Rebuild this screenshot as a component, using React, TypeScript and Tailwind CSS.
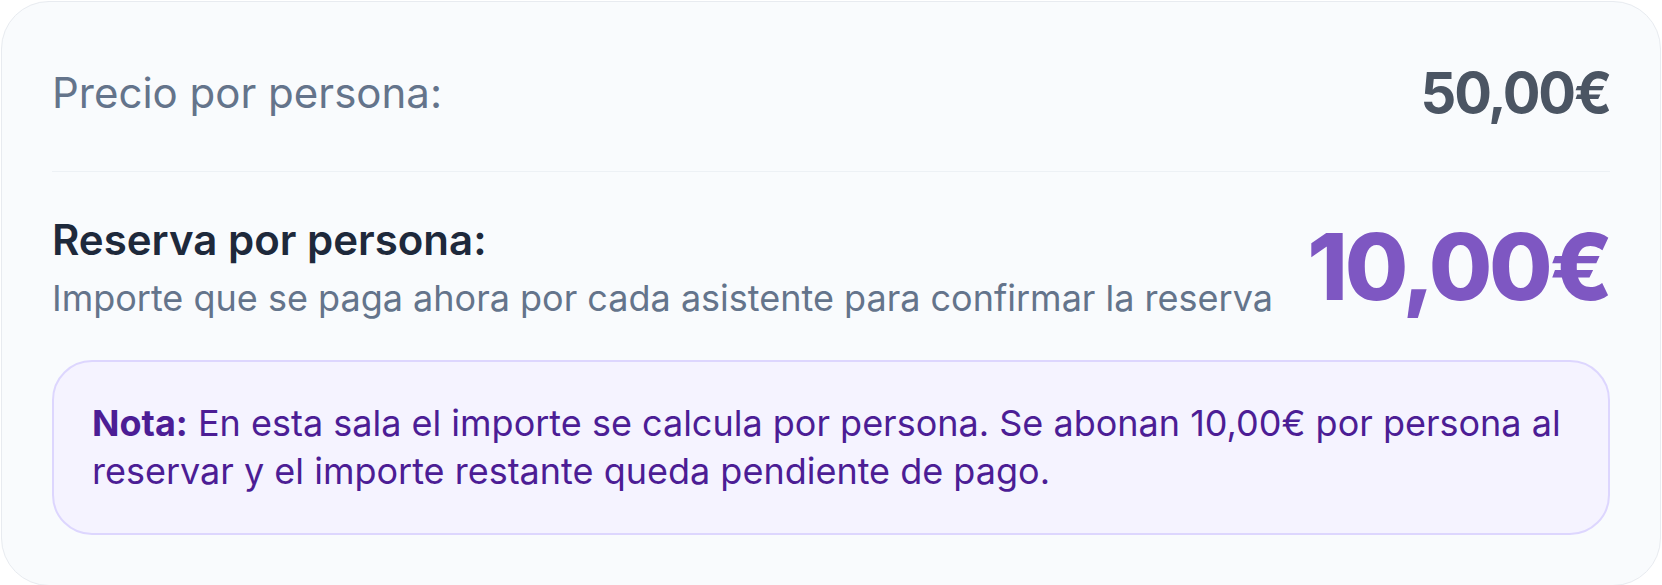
import React from "react";

export default function App() {
  return (
    <div className="min-h-screen bg-white p-px" style={{ fontFamily: "Inter, 'Noto Sans', sans-serif" }}>
      <div className="rounded-[48px] border border-[#e8ebf0] bg-[#f9fbfd] p-[50px]">
        <div className="flex h-[82px] items-center justify-between">
          <span className="text-[42px] leading-none text-[#64748b]">Precio por persona:</span>
          <span className="text-[56px] font-bold leading-none tracking-[-0.04em] text-[#4b5563]">50,00€</span>
        </div>
        <div className="mt-[37px] h-px bg-[#edf1f5]" />
        <div className="mt-[40px] flex items-center justify-between gap-8">
          <div className="flex flex-col">
            <span className="text-[42px] font-semibold leading-[56px] text-[#1e293b]">Reserva por persona:</span>
            <span className="mt-[7px] text-[36px] leading-[46px] text-[#64748b]">
              Importe que se paga ahora por cada asistente para confirmar la reserva
            </span>
          </div>
          <span className="text-[92px] font-extrabold leading-none tracking-[-0.035em] text-[#7e57c2]">10,00€</span>
        </div>
        <div className="mt-[39px] rounded-[40px] border-2 border-[#ddd6fe] bg-[#f5f3ff] px-[38px] pb-[38px] pt-[37px]">
          <p className="text-[36px] leading-[48px] text-[#4c1d95]">
            <span className="font-bold">Nota:</span> En esta sala el importe se calcula por persona. Se abonan 10,00€ por persona al reservar y el importe restante queda pendiente de pago.
          </p>
        </div>
      </div>
    </div>
  );
}
